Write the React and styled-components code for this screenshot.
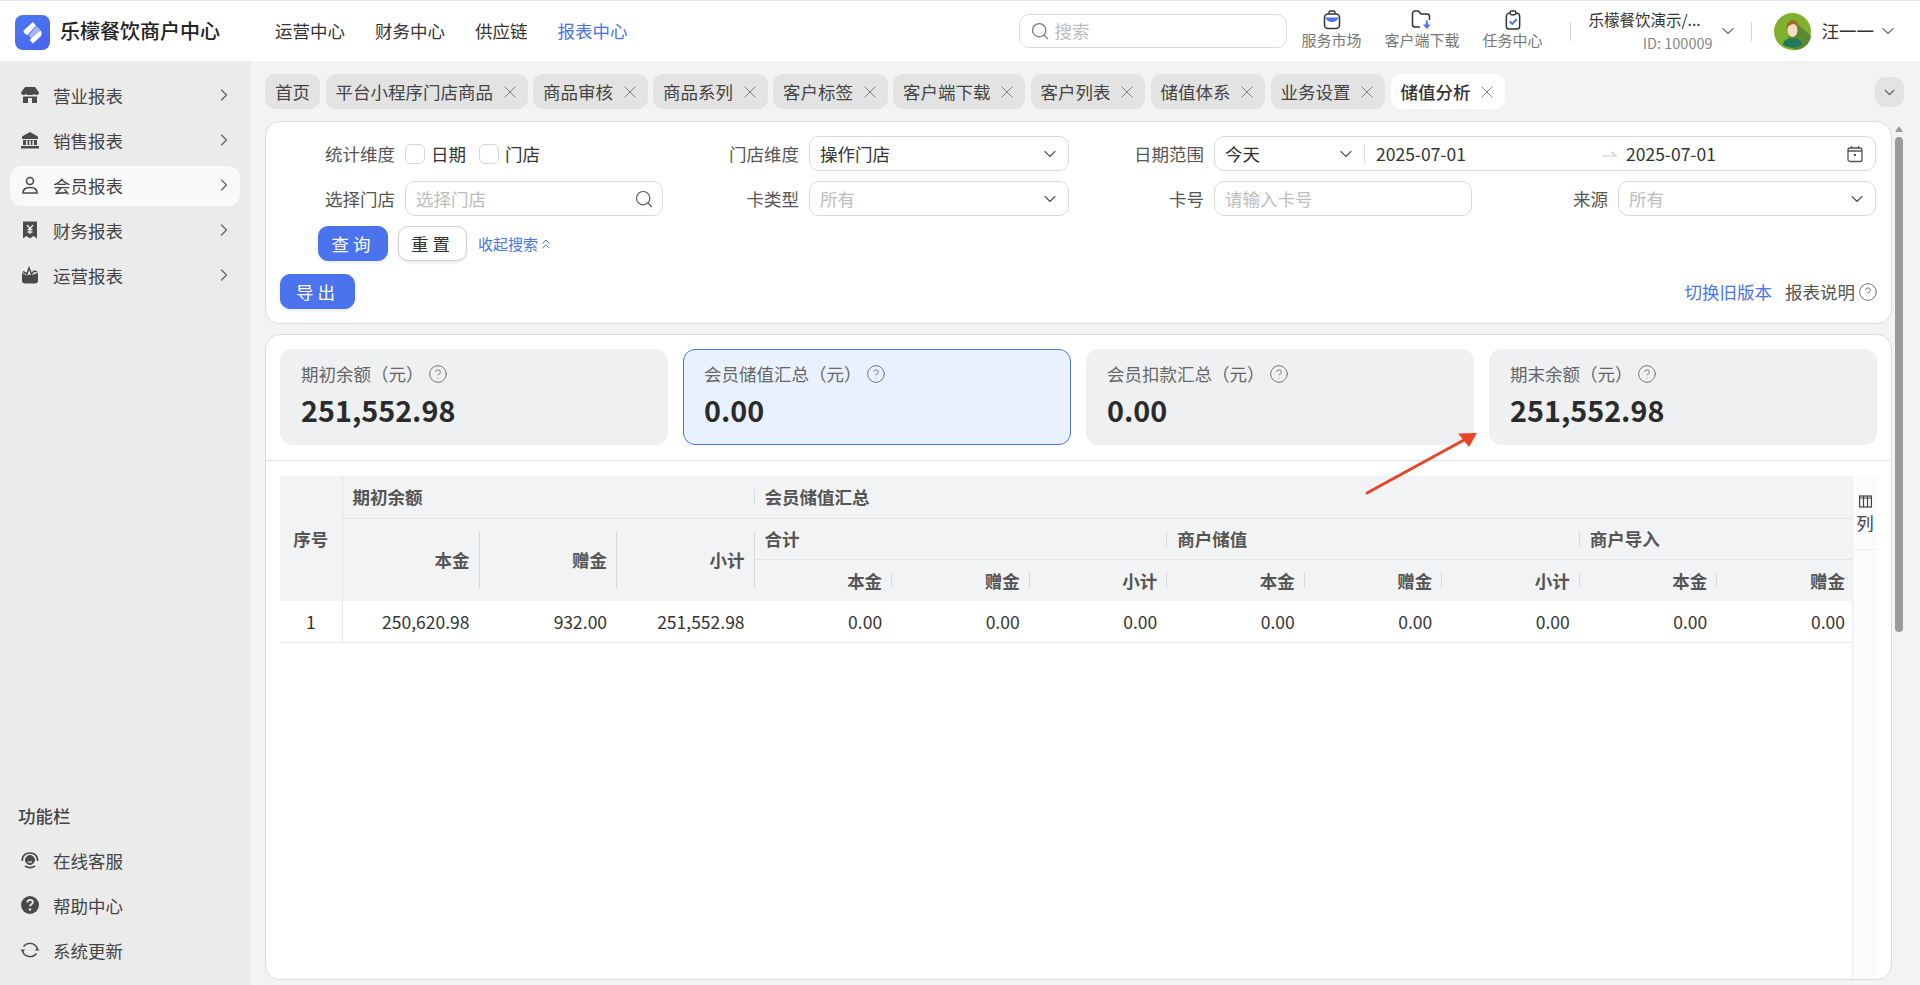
import React from 'react';
import styled, { createGlobalStyle } from 'styled-components';
import { ChevronRight, ChevronDown, ChevronsUp, X, Search, CircleHelp } from 'lucide-react';

const GlobalStyle = createGlobalStyle`
	html, body {
		margin: 0;
		padding: 0;
		height: 100%;
		overflow: hidden;
	}
	body {
		font-family: "Noto Sans CJK SC", "Noto Sans", sans-serif;
		font-size: 17.5px;
		color: #333;
	}
	* {
		box-sizing: border-box;
	}
`;

const Page = styled.div`
	width: 1920px;
	height: 985px;
	display: flex;
	flex-direction: column;
	background: #f2f3f5;
	overflow: hidden;
`;

const Header = styled.header`
	height: 61px;
	flex: none;
	display: flex;
	align-items: center;
	background: #fff;
	border-top: 1px solid #ebe3f0;
	padding-left: 15px;
	white-space: nowrap;
	> * {
		flex: none;
	}
`;
const LogoMark = styled.div`
	width: 35px;
	height: 35px;
	border-radius: 8px;
	background: linear-gradient(135deg, #4a78f2, #4a62ef);
	margin-top: 2px;
`;
const LogoText = styled.div`
	margin: 0 0 2px 10px;
	width: 215px;
	font-size: 20px;
	font-weight: 500;
	color: #222;
`;
const TopNav = styled.nav`
	display: flex;
	gap: 30px;
	margin-bottom: 2px;
`;
const TopNavItem = styled.span`
	font-size: 17.5px;
	color: ${(p) => (p.$active ? '#4a73ed' : '#333')};
`;
const TopSearch = styled.div`
	margin-left: 391px;
	width: 268px;
	height: 34px;
	display: flex;
	align-items: center;
	gap: 5px;
	padding-left: 10px;
	border: 1px solid #dcdcdc;
	border-radius: 10px;
	color: #777;
	font-size: 17.5px;
	span {
		color: #bdbdbd;
		margin-bottom: 2px;
	}
`;
const ToolGroup = styled.div`
	margin: 0 0 2px 15px;
	display: flex;
	gap: 23px;
`;
const Tool = styled.div`
	display: flex;
	flex-direction: column;
	align-items: center;
	font-size: 15px;
	line-height: 20px;
	color: #777;
`;
const VLine = styled.div`
	width: 1px;
	height: 19px;
	background: #d5d5d5;
	margin: 0 ${(p) => p.$right}px 0 ${(p) => p.$left}px;
`;
const Merchant = styled.div`
	width: 124px;
	display: flex;
	flex-direction: column;
	align-items: flex-end;
	font-size: 15.5px;
	line-height: 23px;
	color: #333;
	span {
		align-self: flex-start;
	}
	small {
		font-size: 14.5px;
		color: #888;
	}
`;
const ChevronWrap = styled.span`
	display: inline-flex;
	color: #777;
	margin-left: ${(p) => p.$left || 0}px;
`;
const UserName = styled.span`
	margin: 0 0 2px 11px;
	font-size: 17.5px;
	color: #333;
`;

const Body = styled.div`
	flex: 1;
	min-height: 0;
	display: flex;
`;

const Sidebar = styled.aside`
	width: 250px;
	flex: none;
	background: #ebebeb;
	padding: 15px 10px 9px;
	display: flex;
	flex-direction: column;
`;
const SideItem = styled.div`
	height: 40px;
	margin-bottom: 5px;
	padding-bottom: 2px;
	display: flex;
	align-items: center;
	padding-left: 10px;
	border-radius: 12px;
	background: ${(p) => (p.$active ? '#fafafa' : 'transparent')};
	color: #444;
	font-size: 17.5px;
	svg.icon {
		width: 20px;
		height: 20px;
		margin-right: 13px;
		flex: none;
	}
	span {
		flex: 1;
	}
`;
const SideChevron = styled(ChevronRight)`
	color: #666;
	margin-right: 6px;
`;
const SideTitle = styled.div`
	margin-top: auto;
	padding-left: 8px;
	height: 24px;
	line-height: 24px;
	margin-bottom: 13px;
	font-size: 17.5px;
	font-weight: 500;
	color: #444;
`;

const Main = styled.main`
	flex: 1;
	min-width: 0;
	display: flex;
	flex-direction: column;
	padding-left: 15px;
`;
const TabBar = styled.div`
	height: 60px;
	flex: none;
	padding-top: 13px;
	display: flex;
	align-items: flex-start;
	gap: 5.5px;
`;
const Tab = styled.div`
	height: 35px;
	display: flex;
	align-items: center;
	gap: 6.5px;
	padding: 0 ${(p) => (p.$plain ? 10 : 8)}px 0 10px;
	border-radius: 10px;
	background: ${(p) => (p.$active ? '#fff' : '#e3e3e3')};
	color: ${(p) => (p.$active ? '#333' : '#444')};
	font-size: 17.5px;
	font-weight: ${(p) => (p.$active ? 500 : 400)};
	white-space: nowrap;
`;
const TabMenu = styled.div`
	margin-left: auto;
	margin-right: 16px;
	margin-top: 3px;
	width: 29px;
	height: 30px;
	border-radius: 10px;
	background: #e3e3e3;
	display: flex;
	align-items: center;
	justify-content: center;
`;

const Scroller = styled.div`
	flex: 1;
	min-height: 0;
	display: flex;
	flex-direction: column;
	gap: 10px;
	padding-bottom: 5px;
	width: 1627px;
`;
const Panel = styled.section`
	background: #fff;
	border: 1px solid #dcdcdc;
	border-radius: 15px;
`;
const FilterPanel = styled(Panel)`
	flex: none;
	height: 203px;
	padding: 14px 15px 0 0;
`;
const FormGrid = styled.div`
	display: grid;
	grid-template-columns: 397px 406px 403px 404px;
	row-gap: 10px;
`;
const FormItem = styled.div`
	grid-column: ${(p) => p.$span || 'auto'};
	display: flex;
	align-items: center;
	justify-content: flex-end;
	height: 35px;
`;
const Label = styled.label`
	margin-right: 10px;
	color: #555;
	font-size: 17.5px;
	white-space: nowrap;
`;
const Checks = styled.div`
	width: 258px;
	display: flex;
	align-items: center;
	color: #333;
`;
const CheckBox = styled.span`
	width: 20px;
	height: 20px;
	border: 1px solid #d5d5d5;
	border-radius: 6px;
	margin-right: 6px;
`;
const CheckText = styled.span`
	margin-right: 13px;
`;
const Control = styled.div`
	width: ${(p) => p.$w}px;
	height: 35px;
	display: flex;
	align-items: center;
	padding: 0 8px 0 10px;
	border: 1px solid #d9d9d9;
	border-radius: 10px;
	background: #fff;
	color: ${(p) => (p.$muted ? '#bdbdbd' : '#333')};
	span {
		flex: 1;
	}
`;
const DateRange = styled.div`
	width: 662px;
	height: 35px;
	display: flex;
	align-items: center;
	padding: 0 10px;
	border: 1px solid #d9d9d9;
	border-radius: 10px;
	color: #333;
	> * {
		flex: none;
	}
`;
const DatePreset = styled.div`
	width: 140px;
	height: 19px;
	display: flex;
	align-items: center;
	justify-content: space-between;
	padding-right: 8px;
	margin-right: 11px;
	border-right: 1px solid #d9d9d9;
`;
const DateValue = styled.span`
	width: ${(p) => p.$w}px;
`;
const DateArrow = styled.svg`
	margin-right: 9px;
`;
const ActionRow = styled.div`
	margin: 10px 0 0 52px;
	display: flex;
	align-items: center;
`;
const Button = styled.button`
	width: ${(p) => p.$w}px;
	height: 35px;
	padding: 0;
	border-radius: 10px;
	border: 1px solid ${(p) => (p.$primary ? '#4a73ed' : '#cfcfcf')};
	background: ${(p) => (p.$primary ? '#4a73ed' : '#fff')};
	color: ${(p) => (p.$primary ? '#fff' : '#333')};
	font: inherit;
	font-size: 17.5px;
	letter-spacing: 4px;
	box-shadow: 0 2px 3px rgba(0, 0, 0, 0.08);
`;
const ResetGap = styled.span`
	width: 10px;
`;
const Collapse = styled.span`
	margin-left: 11px;
	display: inline-flex;
	align-items: center;
	font-size: 15px;
	color: #4a73ed;
`;
const ExportRow = styled.div`
	margin: 13px -2px 0 14px;
	display: flex;
	align-items: center;
`;
const ExportLinks = styled.div`
	margin-left: auto;
	display: flex;
	align-items: center;
	color: #555;
	gap: 3px;
	a {
		color: #4a73ed;
		margin-right: 10px;
	}
`;

const DataPanel = styled(Panel)`
	flex: 1;
	min-height: 0;
	display: flex;
	flex-direction: column;
`;
const CardRow = styled.div`
	flex: none;
	height: 126px;
	padding: 14px 14px 0;
	display: grid;
	grid-template-columns: repeat(4, 388px);
	column-gap: 15px;
	border-bottom: 1px solid #e3e3e3;
`;
const StatCard = styled.div`
	height: 96px;
	padding: 11px 20px 0;
	border-radius: 12px;
	background: ${(p) => (p.$active ? '#eaf1fe' : '#eff0f2')};
	border: 1px solid ${(p) => (p.$active ? '#4a73ed' : '#eff0f2')};
`;
const StatLabel = styled.div`
	display: flex;
	align-items: center;
	gap: 4px;
	height: 25px;
	color: #666;
`;
const StatValue = styled.div`
	margin-top: 4px;
	font-size: 28.75px;
	line-height: 40px;
	font-weight: 700;
	color: #2b2b2b;
`;
const TableWrap = styled.div`
	flex: 1;
	min-height: 0;
	display: flex;
	padding: 15px 14px 0;
`;
const TableClip = styled.div`
	width: 1572px;
	flex: none;
	overflow: hidden;
`;
const Table = styled.table`
	width: 1575px;
	height: 166px;
	table-layout: fixed;
	border-collapse: collapse;
`;
const IndexCol = styled.col`
	width: 62px;
`;
const Th = styled.th`
	position: relative;
	padding: 0 10px;
	background: #f2f3f5;
	font-size: 17.5px;
	font-weight: 700;
	color: #555;
	text-align: ${(p) => p.$align || 'left'};
	border-bottom: ${(p) => (p.$line ? '1px solid #e4e5e7' : 'none')};
	border-right: ${(p) => (p.$divide ? '1px solid #e4e5e7' : 'none')};
	white-space: nowrap;
	&::after {
		content: '';
		display: ${(p) => (p.$sep ? 'block' : 'none')};
		position: absolute;
		right: 0;
		top: 50%;
		width: 1px;
		height: ${(p) => p.$sep}px;
		transform: translateY(-50%);
		background: #d8d9db;
	}
`;
const GroupRow = styled.tr`
	height: ${(p) => p.$h}px;
`;
const Td = styled.td`
	height: 41px;
	padding: 0 10px 0 ${(p) => (p.$align ? '10px' : '0')};
	text-align: ${(p) => p.$align || 'right'};
	color: #333;
	border-bottom: 1px solid #e6e7e9;
	border-right: ${(p) => (p.$divide ? '1px solid #e6e7e9' : 'none')};
`;
const ColumnTool = styled.div`
	width: 25px;
	flex: none;
	background: #fafbfc;
	border-left: 1px solid #eceded;
	color: #444;
`;
const ColumnToolInner = styled.div`
	height: 74px;
	padding-top: 19px;
	display: flex;
	flex-direction: column;
	align-items: center;
	gap: 3px;
	line-height: 24px;
	border-bottom: 1px solid #eceded;
`;
const Track = styled.div`
	position: absolute;
	top: 137px;
	left: 1895px;
	width: 8px;
	height: 495px;
	border-radius: 4px;
	background: #9a9a9a;
	&::before {
		content: '';
		position: absolute;
		top: -11px;
		left: 0;
		border-left: 4px solid transparent;
		border-right: 4px solid transparent;
		border-bottom: 6px solid #9a9a9a;
	}
`;
const Arrow = styled.svg`
	position: absolute;
	left: 1360px;
	top: 425px;
`;

const Ask = () => <CircleHelp size={20} strokeWidth={1.2} color="#777" />;

const IconStore = () => (
	<svg className="icon" viewBox="0 0 20 20">
		<path d="M5 2h10l4 5.5c0 1.7-1.2 2.5-2.6 2.5-1 0-1.7-.4-2.2-1-.5.6-1.3 1-2.2 1H8c-.9 0-1.7-.4-2.2-1-.5.6-1.2 1-2.2 1C2.200 10 1 9.200 1 7.500L5 2z" fill="#4a4a4a" />
		<path d="M3 11.5h14V18H3z" fill="#4a4a4a" />
		<path d="M8 13h4v5H8z" fill="#ebebeb" />
	</svg>
);
const IconBank = () => (
	<svg className="icon" viewBox="0 0 20 20">
		<path d="M10 2l8 4.5V9H2V6.5L10 2z" fill="#4a4a4a" />
		<path d="M3 10h14v5H3z" fill="#4a4a4a" />
		<path d="M6 10.5h1.500V15H6zM9.300 10.5h1.500V15H9.300zM12.500 10.5H14V15h-1.500z" fill="#ebebeb" />
		<path d="M1 16h18v2.500H1z" fill="#4a4a4a" />
	</svg>
);
const IconUser = () => (
	<svg className="icon" viewBox="0 0 20 20" fill="none" stroke="#4a4a4a" strokeWidth="1.6">
		<circle cx="10" cy="6" r="3.5" />
		<path d="M3 18c0-3.500 2.500-5.500 7-5.500s7 2 7 5.500H3z" />
	</svg>
);
const IconBill = () => (
	<svg className="icon" viewBox="0 0 20 20">
		<path d="M3 1.500h14v17l-3.500-2.500L10 18.500 6.500 16 3 18.500z" fill="#4a4a4a" />
		<path d="M7 5l3 3.500L13 5M10 8.500V14M7.500 9.500h5M7.500 12h5" stroke="#ebebeb" strokeWidth="1.3" fill="none" />
	</svg>
);
const IconOps = () => (
	<svg className="icon" viewBox="0 0 20 20">
		<path d="M2 8l5 2.500 2.500-1 2 .5L18 8v7.500a3 3 0 0 1-3 3H5a3 3 0 0 1-3-3z" fill="#4a4a4a" />
		<path d="M3 6.500l4 2.500 2-6 2.500 6 2.500-3 3 1" stroke="#4a4a4a" strokeWidth="1.5" fill="none" />
	</svg>
);
const IconService = () => (
	<svg className="icon" viewBox="0 0 20 20" fill="none" stroke="#4a4a4a">
		<circle cx="10" cy="10" r="4.5" fill="#4a4a4a" />
		<path d="M8 11.500c1 1 3 1 4 0" stroke="#ebebeb" strokeWidth="1.2" />
		<path d="M2.500 11c-1-5 3-8 7.500-8s8 3 7.500 8M5 16c3 2 7 2 10 0" strokeWidth="1.7" />
	</svg>
);
const IconHelp = () => (
	<svg className="icon" viewBox="0 0 20 20">
		<circle cx="10" cy="10" r="9" fill="#4a4a4a" />
		<path d="M7.300 7.500c0-1.700 1.200-2.600 2.800-2.600s2.700 1 2.700 2.300c0 2-2.800 2-2.800 4.100" stroke="#ebebeb" strokeWidth="1.8" fill="none" />
		<circle cx="10" cy="14.5" r="1.2" fill="#ebebeb" />
	</svg>
);
const IconSync = () => (
	<svg className="icon" viewBox="0 0 20 20" fill="none" stroke="#4a4a4a" strokeWidth="1.4">
		<path d="M3.500 6.500A8 8 0 0 1 17.500 9" />
		<path d="M16.500 13.500A8 8 0 0 1 2.500 11" />
		<path d="M0.500 9.500h4.500l-2.200 3zM15 10.500h4.500l-2.300-3z" fill="#4a4a4a" stroke="none" />
	</svg>
);

const IconBag = () => (
	<svg width="20" height="20" viewBox="0 0 20 20" fill="none">
		<path d="M7 3.500v-1C7 1.700 7.700 1 8.500 1h3c.8 0 1.500.7 1.500 1.500v1" stroke="#333" strokeWidth="1.5" />
		<rect x="2.5" y="4" width="15" height="14.5" rx="3.500" stroke="#333" strokeWidth="1.5" />
		<path d="M3.500 7.500h13c-.5 2.500-3.500 4.500-6.500 4.500s-6-2-6.500-4.500z" fill="#4a73ed" />
	</svg>
);
const IconFolder = () => (
	<svg width="22" height="20" viewBox="0 0 22 20" fill="none">
		<path d="M9 17H4a2.500 2.500 0 0 1-2.500-2.500v-11A2.500 2.500 0 0 1 4 1h3.500l2.500 3h6a2.500 2.500 0 0 1 2.500 2.500V10" stroke="#333" strokeWidth="1.5" />
		<path d="M15.800 10.500v5" stroke="#4a73ed" strokeWidth="2" />
		<path d="M12 14.500h7.500L15.800 19z" fill="#4a73ed" />
	</svg>
);
const IconClip = () => (
	<svg width="20" height="20" viewBox="0 0 20 21" fill="none">
		<rect x="3" y="3.5" width="14" height="16.5" rx="3" stroke="#333" strokeWidth="1.5" />
		<rect x="7" y="1" width="6" height="4" rx="1.5" fill="#fff" stroke="#333" strokeWidth="1.5" />
		<path d="M6.500 12l2.700 2.700L14 9.500" stroke="#4a73ed" strokeWidth="2" />
	</svg>
);
const Avatar = () => (
	<svg width="37" height="37" viewBox="0 0 37 37">
		<circle cx="18.5" cy="18.5" r="18.5" fill="#7fb02e" />
		<path d="M21 9l16 14c-1 8-8 14-16 14l-9-7z" fill="#5c8a2e" />
		<path d="M9 32c0-5 4-6.500 9.500-6.500S28 27 28 32a18.500 18.500 0 0 1-19 0z" fill="#1f7a5c" />
		<ellipse cx="18.5" cy="17" rx="5" ry="7" fill="#f4dcc6" />
		<path d="M13 16c-1-6 3-9 6-9s6 3 5 8c-1-3-3-4-5-4-3 1-5 2-6 5z" fill="#a9642b" />
	</svg>
);

const tabs = ['平台小程序门店商品', '商品审核', '商品系列', '客户标签', '客户端下载', '客户列表', '储值体系', '业务设置'];
const sideMenu = [
	{ name: '营业报表', Icon: IconStore },
	{ name: '销售报表', Icon: IconBank },
	{ name: '会员报表', Icon: IconUser, active: true },
	{ name: '财务报表', Icon: IconBill },
	{ name: '运营报表', Icon: IconOps },
];
const stats = [
	{ label: '期初余额（元）', value: '251,552.98' },
	{ label: '会员储值汇总（元）', value: '0.00', active: true },
	{ label: '会员扣款汇总（元）', value: '0.00' },
	{ label: '期末余额（元）', value: '251,552.98' },
];
const subHeads = ['本金', '赠金', '小计', '本金', '赠金', '小计', '本金', '赠金'];
const bodyValues = ['250,620.98', '932.00', '251,552.98', '0.00', '0.00', '0.00', '0.00', '0.00', '0.00', '0.00', '0.00'];

const App = () => {
	return (
		<Page>
			<GlobalStyle />
			<Header>
				<LogoMark>
					<svg width="35" height="35" viewBox="0 0 35 35">
						<path d="M8.500 15.500L18 7l3 3.500-8.500 9.500c-2-.5-4-2-4-4.500z" fill="#fff" />
						<path d="M13.500 20.500L21.500 11l4 4-8.500 9z" fill="#fff" opacity="0.5" />
						<path d="M25.500 15.500c1.500 2 1.500 4.500 0 6L18 28.500l-3.500-3.500z" fill="#fff" />
					</svg>
				</LogoMark>
				<LogoText>乐檬餐饮商户中心</LogoText>
				<TopNav>
					<TopNavItem>运营中心</TopNavItem>
					<TopNavItem>财务中心</TopNavItem>
					<TopNavItem>供应链</TopNavItem>
					<TopNavItem $active>报表中心</TopNavItem>
				</TopNav>
				<TopSearch>
					<Search size={20} strokeWidth={1.5} />
					<span>搜索</span>
				</TopSearch>
				<ToolGroup>
					<Tool>
						<IconBag />
						服务市场
					</Tool>
					<Tool>
						<IconFolder />
						客户端下载
					</Tool>
					<Tool>
						<IconClip />
						任务中心
					</Tool>
				</ToolGroup>
				<VLine $left={27} $right={18} />
				<Merchant>
					<span>乐檬餐饮演示/...</span>
					<small>ID: 100009</small>
				</Merchant>
				<ChevronWrap $left={5}>
					<ChevronDown size={20} strokeWidth={1.4} />
				</ChevronWrap>
				<VLine $left={13} $right={22} />
				<Avatar />
				<UserName>汪一一</UserName>
				<ChevronWrap $left={4}>
					<ChevronDown size={20} strokeWidth={1.4} />
				</ChevronWrap>
			</Header>
			<Body>
				<Sidebar>
					{sideMenu.map((item) => (
						<SideItem key={item.name} $active={item.active}>
							<item.Icon />
							<span>{item.name}</span>
							<SideChevron size={20} strokeWidth={1.5} />
						</SideItem>
					))}
					<SideTitle>功能栏</SideTitle>
					<SideItem>
						<IconService />
						<span>在线客服</span>
					</SideItem>
					<SideItem>
						<IconHelp />
						<span>帮助中心</span>
					</SideItem>
					<SideItem>
						<IconSync />
						<span>系统更新</span>
					</SideItem>
				</Sidebar>
				<Main>
					<TabBar>
						<Tab $plain>首页</Tab>
						{tabs.map((t) => (
							<Tab key={t}>
								{t}
								<X size={20} strokeWidth={1.1} color="#777" />
							</Tab>
						))}
						<Tab $active>
							储值分析
							<X size={20} strokeWidth={1.1} color="#777" />
						</Tab>
						<TabMenu>
							<ChevronDown size={17} strokeWidth={1.8} color="#555" />
						</TabMenu>
					</TabBar>
					<Scroller>
						<FilterPanel>
							<FormGrid>
								<FormItem>
									<Label>统计维度</Label>
									<Checks>
										<CheckBox />
										<CheckText>日期</CheckText>
										<CheckBox />
										<CheckText>门店</CheckText>
									</Checks>
								</FormItem>
								<FormItem>
									<Label>门店维度</Label>
									<Control $w={260}>
										<span>操作门店</span>
										<ChevronDown size={20} strokeWidth={1.4} color="#555" />
									</Control>
								</FormItem>
								<FormItem $span="span 2">
									<Label>日期范围</Label>
									<DateRange>
										<DatePreset>
											今天
											<ChevronDown size={20} strokeWidth={1.4} color="#555" />
										</DatePreset>
										<DateValue $w={225}>2025-07-01</DateValue>
										<DateArrow width="16" height="10" viewBox="0 0 16 10" fill="none" stroke="#c8c8c8" strokeWidth="1.2">
											<path d="M1 7h14L10 3" />
										</DateArrow>
										<DateValue $w={220}>2025-07-01</DateValue>
										<svg width="18" height="18" viewBox="0 0 18 18" fill="none" stroke="#555" strokeWidth="1.3">
											<rect x="2" y="3" width="14" height="13.5" rx="2" />
											<path d="M5.500 1v3M12.500 1v3M2 6h14" />
											<rect x="8" y="9" width="2" height="2" fill="#555" stroke="none" />
										</svg>
									</DateRange>
								</FormItem>
								<FormItem>
									<Label>选择门店</Label>
									<Control $w={258} $muted>
										<span>选择门店</span>
										<Search size={20} strokeWidth={1.4} color="#555" />
									</Control>
								</FormItem>
								<FormItem>
									<Label>卡类型</Label>
									<Control $w={260} $muted>
										<span>所有</span>
										<ChevronDown size={20} strokeWidth={1.4} color="#555" />
									</Control>
								</FormItem>
								<FormItem>
									<Label>卡号</Label>
									<Control $w={258} $muted>
										<span>请输入卡号</span>
									</Control>
								</FormItem>
								<FormItem>
									<Label>来源</Label>
									<Control $w={258} $muted>
										<span>所有</span>
										<ChevronDown size={20} strokeWidth={1.4} color="#555" />
									</Control>
								</FormItem>
							</FormGrid>
							<ActionRow>
								<Button $primary $w={70}>查询</Button>
								<ResetGap />
								<Button $w={69}>重置</Button>
								<Collapse>
									收起搜索
									<ChevronsUp size={16} strokeWidth={1.5} />
								</Collapse>
							</ActionRow>
							<ExportRow>
								<Button $primary $w={75}>导出</Button>
								<ExportLinks>
									<a>切换旧版本</a>
									报表说明
									<Ask />
								</ExportLinks>
							</ExportRow>
						</FilterPanel>
						<DataPanel>
							<CardRow>
								{stats.map((s) => (
									<StatCard key={s.label} $active={s.active}>
										<StatLabel>
											{s.label}
											<Ask />
										</StatLabel>
										<StatValue>{s.value}</StatValue>
									</StatCard>
								))}
							</CardRow>
							<TableWrap>
								<TableClip>
									<Table>
										<colgroup>
											<IndexCol />
											{bodyValues.map((v, i) => (
												<col key={i} />
											))}
										</colgroup>
										<thead>
											<GroupRow $h={42}>
												<Th rowSpan={3} $align="center" $divide>序号</Th>
												<Th colSpan={3} $line $sep={15}>期初余额</Th>
												<Th colSpan={8} $line>会员储值汇总</Th>
											</GroupRow>
											<GroupRow $h={41}>
												<Th rowSpan={2} $align="right" $sep={57}>本金</Th>
												<Th rowSpan={2} $align="right" $sep={57}>赠金</Th>
												<Th rowSpan={2} $align="right" $sep={57}>小计</Th>
												<Th colSpan={3} $line $sep={15}>合计</Th>
												<Th colSpan={3} $line $sep={15}>商户储值</Th>
												<Th colSpan={2} $line>商户导入</Th>
											</GroupRow>
											<GroupRow $h={42}>
												{subHeads.map((h, i) => (
													<Th key={i} $align="right" $sep={i < 7 ? 15 : 0}>{h}</Th>
												))}
											</GroupRow>
										</thead>
										<tbody>
											<tr>
												<Td $align="center" $divide>1</Td>
												{bodyValues.map((v, i) => (
													<Td key={i}>{v}</Td>
												))}
											</tr>
										</tbody>
									</Table>
								</TableClip>
								<ColumnTool>
									<ColumnToolInner>
										<svg width="13" height="13" viewBox="0 0 13 13" fill="none" stroke="#444" strokeWidth="1.2">
											<rect x="0.6" y="1" width="11.8" height="11" />
											<path d="M0.600 3h11.800M4.500 1v11M8.500 1v11" />
										</svg>
										<span>列</span>
									</ColumnToolInner>
								</ColumnTool>
							</TableWrap>
						</DataPanel>
					</Scroller>
				</Main>
			</Body>
			<Track />
			<Arrow width="125" height="75" viewBox="0 0 125 75" fill="none">
				<path d="M7 68L104 15" stroke="#e8442a" strokeWidth="3" strokeLinecap="round" />
				<path d="M117 8L98 8.500l5 6 6 7.500z" fill="#e8442a" />
			</Arrow>
		</Page>
	);
};

export default App;
